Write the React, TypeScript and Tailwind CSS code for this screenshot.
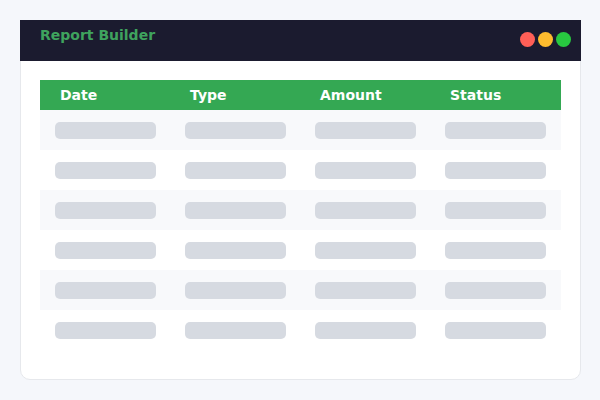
const columns = ['Date', 'Type', 'Amount', 'Status'];
const rows = [0, 1, 2, 3, 4, 5];

export default function App() {
  return (
    <div
      className="w-[600px] h-[400px] bg-[#f5f7fb] pt-[20px] pl-[20px]"
      style={{ fontFamily: '"DejaVu Sans", Verdana, sans-serif' }}
    >
      <div className="w-[561px] h-[360px] bg-white border border-[#e6e8ec] rounded-b-[10px] rounded-t-none">
        {/* window bar */}
        <div className="-mx-px -mt-px h-[41px] bg-[#1b1b2f] flex items-start justify-between pl-[20px] pr-[10px]">
          <h1 className="pt-[7px] text-[14px] leading-[16px] font-bold text-[#3fa35e]">Report Builder</h1>
          <div className="flex gap-[3px] mt-[12px]">
            <span className="w-[15px] h-[15px] rounded-full bg-[#ff5f57]" />
            <span className="w-[15px] h-[15px] rounded-full bg-[#febc2e]" />
            <span className="w-[15px] h-[15px] rounded-full bg-[#28c840]" />
          </div>
        </div>

        <div className="pt-[19px] pl-[19px]">
          <div className="w-[521px]">
            <div className="h-[30px] bg-[#34a853] grid grid-cols-[130px_130px_130px_131px] items-center">
              {columns.map((c) => (
                <div key={c} className="pl-[20px] text-[14px] leading-[16px] font-bold text-white">
                  {c}
                </div>
              ))}
            </div>
            {rows.map((r) => (
              <div
                key={r}
                className={`h-[40px] grid grid-cols-[130px_130px_130px_131px] items-center ${
                  r % 2 === 0 ? 'bg-[#f8f9fb]' : 'bg-white'
                }`}
              >
                {columns.map((c) => (
                  <div key={c} className="pl-[15px]">
                    <div className="w-[101px] h-[17px] rounded-[5px] bg-[#d6dae1]" />
                  </div>
                ))}
              </div>
            ))}
          </div>
        </div>
      </div>
    </div>
  );
}
